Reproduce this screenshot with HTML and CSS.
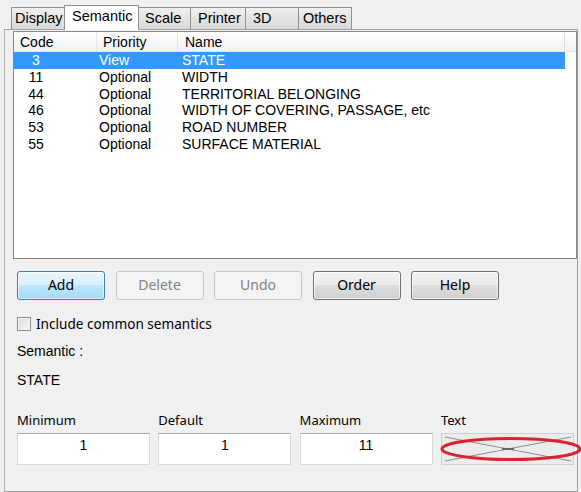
FILE: index.html
```html
<!DOCTYPE html>
<html>
<head>
<meta charset="utf-8">
<link rel="stylesheet" href="styles.css">
</head>
<body>
<div class="tabs">
  <div class="tab t-display">Display</div>
  <div class="tab t-semantic active">Semantic</div>
  <div class="tab t-scale">Scale</div>
  <div class="tab t-printer">Printer</div>
  <div class="tab t-3d">3D</div>
  <div class="tab t-others">Others</div>
</div>
<div class="panel">
  <div class="list">
    <div class="row head">
      <div class="c1">Code</div><div class="c2">Priority</div><div class="c3">Name</div><div class="c4"></div>
    </div>
    <div class="row sel"><div class="c1"><span class="num">3</span></div><div class="c2">View</div><div class="c3">STATE</div></div>
    <div class="row"><div class="c1"><span class="num">11</span></div><div class="c2">Optional</div><div class="c3">WIDTH</div></div>
    <div class="row"><div class="c1"><span class="num">44</span></div><div class="c2">Optional</div><div class="c3">TERRITORIAL BELONGING</div></div>
    <div class="row"><div class="c1"><span class="num">46</span></div><div class="c2">Optional</div><div class="c3">WIDTH OF COVERING, PASSAGE, etc</div></div>
    <div class="row"><div class="c1"><span class="num">53</span></div><div class="c2">Optional</div><div class="c3">ROAD NUMBER</div></div>
    <div class="row"><div class="c1"><span class="num">55</span></div><div class="c2">Optional</div><div class="c3">SURFACE MATERIAL</div></div>
  </div>
  <div class="buttons">
    <div class="btn default">Add</div>
    <div class="btn disabled">Delete</div>
    <div class="btn disabled">Undo</div>
    <div class="btn">Order</div>
    <div class="btn">Help</div>
  </div>
  <div class="check"><span class="box"></span><span class="check-label">Include common semantics</span></div>
  <div class="sem-label">Semantic :</div>
  <div class="sem-value">STATE</div>
  <div class="fields">
    <div class="field"><div class="flabel">Minimum</div><div class="input">1</div></div>
    <div class="field"><div class="flabel">Default</div><div class="input">1</div></div>
    <div class="field"><div class="flabel">Maximum</div><div class="input">11</div></div>
    <div class="field"><div class="flabel">Text</div>
      <div class="input textbox">
        <svg class="cross" width="132" height="30" viewBox="0 0 132 30"><line x1="3" y1="3" x2="129" y2="27" stroke="#8c8c8c" stroke-width="1"/><line x1="3" y1="27" x2="129" y2="3" stroke="#8c8c8c" stroke-width="1"/><line x1="60" y1="15" x2="72" y2="15" stroke="#666" stroke-width="2"/></svg>
        <svg class="ellipse" width="142" height="26" viewBox="0 0 142 26"><ellipse cx="71" cy="13" rx="69" ry="10.5" fill="none" stroke="#d9232e" stroke-width="3"/></svg>
      </div>
    </div>
  </div>
</div>
</body>
</html>
```

FILE: styles.css
```css
html, body { margin: 0; padding: 0; }
body {
  background: #f0f0f0;
  width: 581px;
  height: 492px;
  overflow: hidden;
  font-family: "Liberation Sans", Arial, sans-serif;
  font-size: 14px;
  color: #000;
}
.tabs {
  display: flex;
  align-items: flex-end;
  padding-left: 11px;
  height: 24px;
  padding-top: 5px;
}
.tab {
  height: 22px;
  box-sizing: border-box;
  border: 1px solid #8e9096;
  border-bottom: none;
  border-right: none;
  background: linear-gradient(#f0f0f0, #e3e3e3 50%, #d9d9d9);
  padding-left: 3px;
  line-height: 21px;
  font-size: 14.5px;
  position: relative;
}
.t-display { width: 53px; }
.t-semantic { width: 75px; }
.t-scale { width: 51px; padding-left: 6px; }
.t-printer { width: 55px; padding-left: 7px; }
.t-3d { width: 53px; padding-left: 7px; }
.t-others { width: 54px; padding-left: 4px; border-right: 1px solid #8e9096; }
.tab.active {
  height: 25px;
  background: #fff;
  border-right: 1px solid #8e9096;
  padding-left: 7px;
  line-height: 20px;
  margin-bottom: -1px;
  z-index: 2;
}
.tab.active + .tab { border-left: none; }
.panel {
  margin-left: 4px;
  width: 574px;
  height: 463px;
  box-sizing: border-box;
  border: 1px solid #a0a0a0;
  border-left: 1px solid #b5b5b5;
  padding: 1px 0 0 8px;
  position: relative;
}
.list {
  height: 228px;
  box-sizing: border-box;
  border: 1px solid #828790;
  background: #fff;
}
.row {
  display: grid;
  grid-template-columns: 83px 81px 387px 1fr;
  height: 16.8px;
  line-height: 16.8px;
}
.row.head {
  height: 20px;
  line-height: 20px;
  box-sizing: border-box;
  background: linear-gradient(#ffffff, #f7f8fa 50%, #f1f2f4);
  border-bottom: 1px solid #e5e5e5;
}
.row.head .c1 { padding-left: 6px; border-right: 1px solid #e5e5e5; }
.row.head .c2 { padding-left: 6px; border-right: 1px solid #e5e5e5; }
.row.head .c3 { padding-left: 7px; border-right: 1px solid #dcdcdc; }
.c2 { padding-left: 2px; }
.c3 { padding-left: 4px; white-space: nowrap; }
.num { display: inline-block; width: 44px; text-align: center; }
.row.sel {
  background: #3399ff;
  color: #fff;
  margin-right: 11px;
}
.buttons {
  display: flex;
  gap: 10.5px;
  margin-top: 12px;
  padding-left: 4px;
}
.btn {
  width: 88px;
  height: 29px;
  box-sizing: border-box;
  border: 1px solid #707070;
  border-radius: 3px;
  background: linear-gradient(#f2f2f2, #ebebeb 49%, #dddddd 50%, #cfcfcf);
  text-align: center;
  line-height: 26px;
  font-family: "Noto Sans", "DejaVu Sans", sans-serif;
  font-size: 14px;
  color: #000;
  box-shadow: inset 0 0 0 1px rgba(255,255,255,0.7);
}
.btn.default {
  border-color: #3c7fb1;
  background: linear-gradient(#eaf6fd, #d9f0fc 49%, #bee6fd 50%, #a7d9f5);
  box-shadow: inset 0 0 0 1px rgba(255,255,255,0.6);
}
.btn.disabled {
  border-color: #c4c6c8;
  background: #f4f4f4;
  color: #838383;
  box-shadow: none;
}
.check {
  display: flex;
  align-items: center;
  margin-top: 16px;
  padding-left: 4px;
  height: 16px;
}
.box {
  width: 14px;
  height: 14px;
  box-sizing: border-box;
  border: 1px solid #8e8f8f;
  background: linear-gradient(135deg, #dcdcdc, #f6f6f6);
  box-shadow: inset 0 0 0 1px #f4f4f4;
}
.check-label {
  margin-left: 5px;
  font-family: "Noto Sans", "DejaVu Sans", sans-serif;
  font-size: 13.6px;
  line-height: 16px;
}
.sem-label {
  margin-top: 11px;
  padding-left: 4px;
  line-height: 16px;
}
.sem-value {
  margin-top: 13px;
  padding-left: 4px;
  line-height: 16px;
}
.fields {
  display: grid;
  grid-template-columns: repeat(4, 133px);
  column-gap: 8.3px;
  margin-top: 24px;
  padding-left: 4px;
}
.flabel {
  font-family: "Noto Sans", "DejaVu Sans", sans-serif;
  font-size: 13px;
  line-height: 16px;
  height: 16px;
  margin-bottom: 5px;
}
.input {
  height: 32px;
  box-sizing: border-box;
  background: #fff;
  border: 1px solid #dadada;
  border-top-color: #abadb3;
  text-align: center;
  line-height: 22px;
}
.textbox {
  background: #ececec;
  border: 1px solid #d0d0d0;
  position: relative;
}
.cross { position: absolute; left: 0; top: 0; }
.ellipse { position: absolute; left: -2px; top: 2px; }
```
